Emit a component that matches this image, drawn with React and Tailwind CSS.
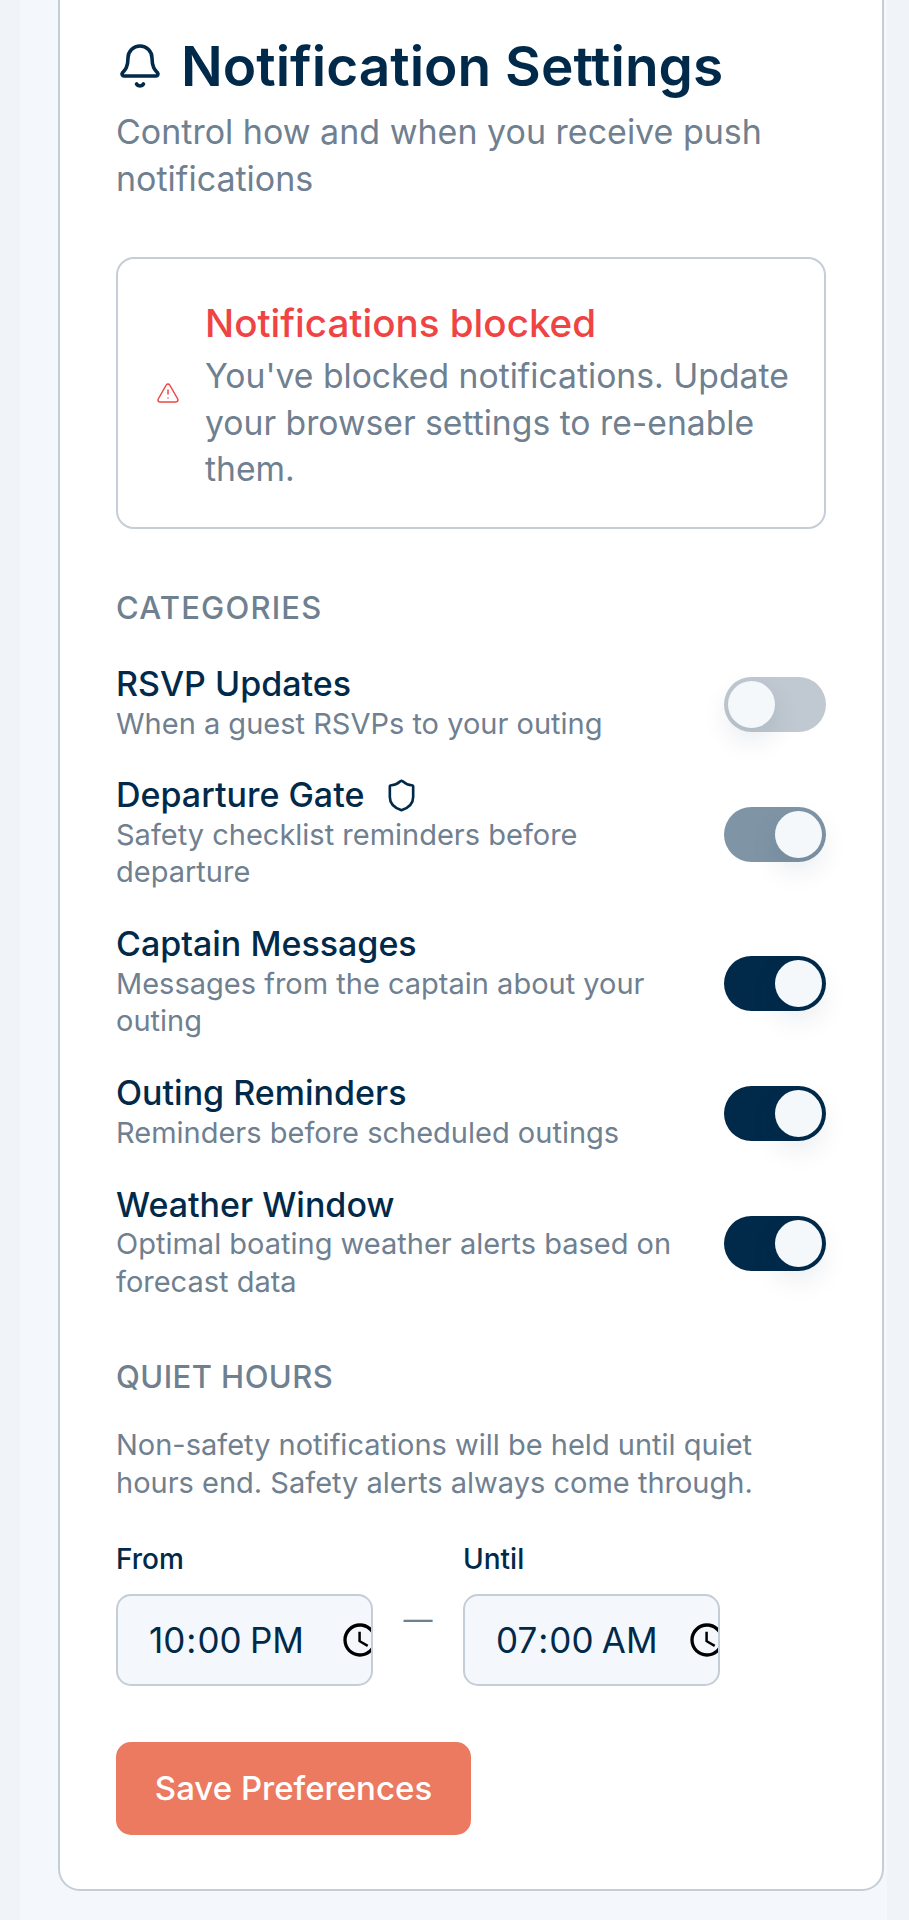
import { Bell, Shield, TriangleAlert } from 'lucide-react';

const categories = [
    { title: 'RSVP Updates', desc: 'When a guest RSVPs to your outing', state: 'off' },
    { title: 'Departure Gate', desc: 'Safety checklist reminders before departure', state: 'locked', safety: true },
    { title: 'Captain Messages', desc: 'Messages from the captain about your outing', state: 'on' },
    { title: 'Outing Reminders', desc: 'Reminders before scheduled outings', state: 'on' },
    { title: 'Weather Window', desc: 'Optimal boating weather alerts based on forecast data', state: 'on' },
];

function Toggle({ state }) {
    const track = state === 'off' ? 'bg-[#c0c9d1] justify-start' : state === 'locked' ? 'bg-[#7f95a6] justify-end' : 'bg-[#012a4a] justify-end';
    return (
        <div className={`flex items-center w-[102px] h-[55px] shrink-0 mt-[4px] rounded-full p-[4px] ${track}`}>
            <div className="w-[47px] h-[47px] rounded-full bg-[#f4f8fb] shadow-[0_12px_28px_rgba(1,42,74,0.1)]" />
        </div>
    );
}

function TimeField({ label, value }) {
    return (
        <div className="flex flex-col">
            <label className="text-[28px] leading-[41px] font-medium text-[#012a4a] mb-[14px]">{label}</label>
            <input
                type="time"
                defaultValue={value}
                className="w-[257px] h-[92px] pl-[30px] pr-0 text-[35px] text-[#012a4a] bg-[#f4f7fb] border-2 border-[#c5ced6] rounded-[15px] outline-none [&::-webkit-calendar-picker-indicator]:mr-[-12px] [&::-webkit-calendar-picker-indicator]:w-[40px] [&::-webkit-calendar-picker-indicator]:h-[40px]"
            />
        </div>
    );
}

export default function App() {
    return (
        <div className="min-h-[1920px] bg-[#f0f4f8] pl-[20px] pr-[22px] font-['Inter',sans-serif]">
            <div className="min-h-[1920px] bg-[#f4f7fb] px-[38px] pb-[29px]">
                {/* Card runs off the top of the page */}
                <div className="bg-white border-2 border-t-0 border-[#c5ced6] rounded-b-[22px] px-[56px] pt-[30px] pb-[54px] w-[826px]">
                    <div className="flex items-center h-[72px]">
                        <Bell className="w-[48px] h-[48px] mr-[17px] text-[#012a4a] shrink-0" strokeWidth={1.8} />
                        <h1 className="text-[55px] leading-[72px] font-semibold text-[#012a4a] whitespace-nowrap">Notification Settings</h1>
                    </div>
                    <p className="text-[34px] leading-[46.5px] text-[#6f8090] mt-[7px]">
                        Control how and when you receive push notifications
                    </p>

                    <div className="flex items-center border-2 border-[#c5ced6] rounded-[18px] h-[272px] mt-[55px] pl-[38px] pr-[24px]">
                        <TriangleAlert className="w-[24px] h-[24px] mr-[25px] text-[#ef4444] shrink-0" strokeWidth={1.5} />
                        <div>
                            <div className="text-[38.6px] leading-[60px] font-medium text-[#ef4444]">Notifications blocked</div>
                            <p className="text-[33.7px] leading-[46.5px] text-[#6f8090]">
                                You've blocked notifications. Update your browser settings to re-enable them.
                            </p>
                        </div>
                    </div>

                    <h2 className="text-[31px] leading-[41px] font-medium tracking-[1.2px] uppercase text-[#6f8090] mt-[58px]">Categories</h2>
                    <div className="flex flex-col gap-[32.4px] mt-[35px]">
                        {categories.map((row) => (
                            <div key={row.title} className="flex items-center justify-between gap-[29px]">
                                <div className="flex-1">
                                    <div className="flex items-center text-[34px] leading-[41.5px] font-medium text-[#012a4a]">
                                        {row.title}
                                        {row.safety && <Shield className="w-[35px] h-[35px] ml-[20px]" strokeWidth={1.8} />}
                                    </div>
                                    <p className="text-[29px] leading-[37.5px] text-[#6f8090]">{row.desc}</p>
                                </div>
                                <Toggle state={row.state} />
                            </div>
                        ))}
                    </div>

                    <h2 className="text-[31px] leading-[41px] font-medium tracking-[0.45px] uppercase text-[#6f8090] mt-[56px]">Quiet Hours</h2>
                    <p className="text-[29px] leading-[37.5px] text-[#6f8090] mt-[29px]">
                        Non-safety notifications will be held until quiet hours end. Safety alerts always come through.
                    </p>
                    <div className="flex mt-[38px]">
                        <TimeField label="From" value="22:00" />
                        <span className="w-[90px] text-center text-[29px] leading-[46px] text-[#6f8090] mt-[48px] pt-[10px]">—</span>
                        <TimeField label="Until" value="07:00" />
                    </div>
                    <button className="block h-[93px] w-[355px] mt-[56px] rounded-[15px] bg-[#ec7a60] text-[33px] font-medium text-white">
                        Save Preferences
                    </button>
                </div>
            </div>
        </div>
    );
}
